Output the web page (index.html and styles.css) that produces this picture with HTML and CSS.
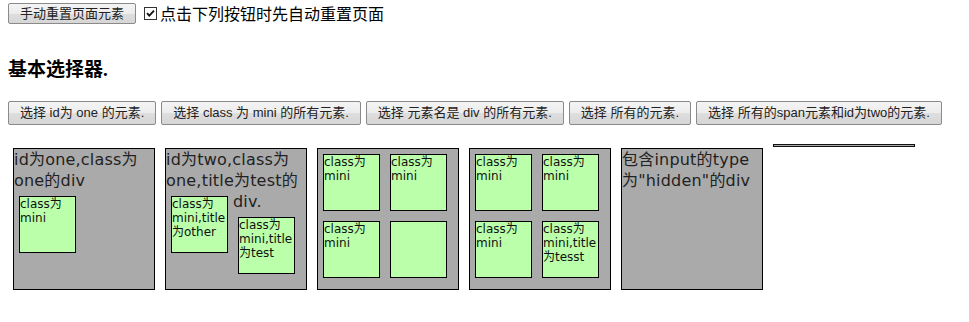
FILE: index.html
```html
<!DOCTYPE html>
<html lang="zh-CN">
<head>
<meta charset="utf-8">
<title>基本选择器</title>
<link rel="stylesheet" href="styles.css">
</head>
<body>
<div class="toolbar">
  <button class="btn btn-reset" type="button">手动重置页面元素</button>
  <label class="auto">
    <span class="check"><svg width="11" height="11" viewBox="0 0 11 11"><path d="M2 5.2 L4.3 7.6 L9 2.6" fill="none" stroke="#111" stroke-width="1.8"/></svg></span>
    点击下列按钮时先自动重置页面
  </label>
</div>
<h3 class="title">基本选择器.</h3>
<div class="actions">
  <button class="btn" type="button">选择 id为 one 的元素.</button>
  <button class="btn" type="button">选择 class 为 mini 的所有元素.</button>
  <button class="btn" type="button">选择 元素名是 div 的所有元素.</button>
  <button class="btn" type="button">选择 所有的元素.</button>
  <button class="btn" type="button">选择 所有的span元素和id为two的元素.</button>
</div>
<div class="stage">
  <div class="one">
    <div class="label">id为one,class为one的div</div>
    <div class="mini">class为mini</div>
  </div>
  <div class="one">id为two,class为one,title为test的div.
    <div class="mini">class为mini,title为other</div>
    <div class="mini">class为mini,title为test</div>
  </div>
  <div class="one">
    <div class="mini">class为mini</div>
    <div class="mini">class为mini</div>
    <div class="mini">class为mini</div>
    <div class="mini"></div>
  </div>
  <div class="one">
    <div class="mini">class为mini</div>
    <div class="mini">class为mini</div>
    <div class="mini">class为mini</div>
    <div class="mini">class为mini,title为tesst</div>
  </div>
  <div class="one">包含input的type为"hidden"的div</div>
  <div class="mover"></div>
</div>
</body>
</html>
```
FILE: styles.css
```css
body {
  margin: 0;
  padding: 3px 8px 0;
  background: #fff;
  color: #000;
  font-family: "Liberation Sans", "Noto Sans CJK SC", sans-serif;
}

.toolbar {
  display: flex;
  align-items: center;
  height: 21px;
}

.btn {
  font-family: "Liberation Sans", "Noto Sans CJK SC", sans-serif;
  font-size: 13px;
  color: #222;
  height: 24px;
  padding: 0 11px;
  margin: 0;
  border: 1px solid #8a8a8a;
  border-radius: 2px;
  background: linear-gradient(#f4f4f4 0%, #ececec 50%, #dedede 51%, #d6d6d6 100%);
  line-height: 20px;
  white-space: nowrap;
}

.btn-reset {
  height: 21px;
  line-height: 17px;
}

.auto {
  display: flex;
  align-items: center;
  margin-left: 8px;
  font-family: "Noto Sans CJK SC", sans-serif;
  font-size: 16px;
  line-height: 21px;
  color: #000;
}

.check {
  display: inline-flex;
  align-items: center;
  justify-content: center;
  width: 11px;
  height: 11px;
  border: 1px solid #333;
  background: #fff;
  margin-right: 3px;
}

.title {
  margin: 35px 0 0;
  font-family: "Liberation Serif", "Noto Sans CJK SC", serif;
  font-size: 19px;
  font-weight: bold;
  line-height: 22px;
}

.actions {
  display: flex;
  gap: 5px;
  margin-top: 20px;
}

.stage {
  display: flex;
  align-items: flex-start;
  margin-top: 18px;
}

.one {
  width: 140px;
  height: 140px;
  margin: 5px;
  border: 1px solid #000;
  background: #aaa;
  color: #222;
  font-family: "DejaVu Sans", "Noto Sans CJK SC", sans-serif;
  font-size: 16px;
  line-height: 21px;
  letter-spacing: 0.2px;
  flex: none;
}

.mini {
  float: left;
  width: 55px;
  height: 55px;
  margin: 5px;
  border: 1px solid #000;
  background: #bbffaa;
  color: #111;
  font-size: 12px;
  line-height: 14px;
  letter-spacing: 0;
  overflow: hidden;
}

.mover {
  width: 140px;
  height: 1px;
  margin: 1px 5px 0;
  border: 1px solid #111;
  background: #aaa;
  flex: none;
}
```
